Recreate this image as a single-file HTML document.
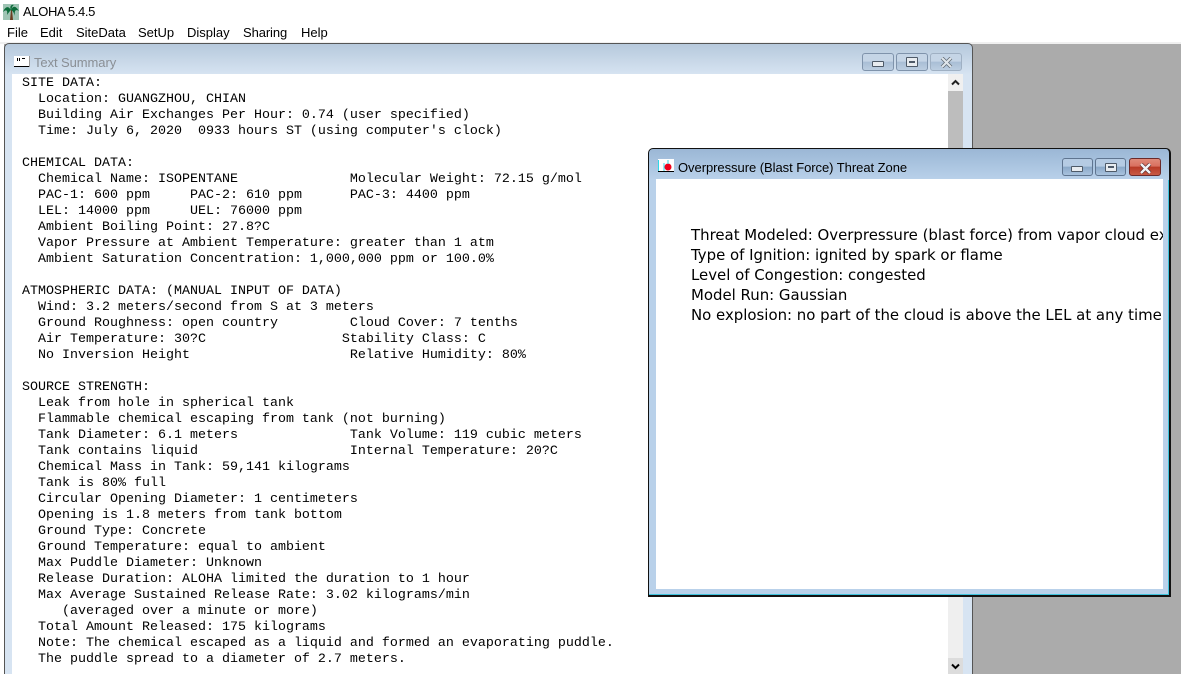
<!DOCTYPE html>
<html><head><meta charset="utf-8"><style>
html,body{margin:0;padding:0;background:#fff;width:1181px;height:674px;overflow:hidden}
div,svg,pre,span{position:absolute;box-sizing:border-box}
pre{margin:0}
.m{top:25px;font:13px/16px "Liberation Sans",sans-serif;color:#000;white-space:nowrap}
.b{border:1px solid #7f93ab;border-radius:3px;height:18px;width:32px}
.i{background:linear-gradient(#c5d5e6 0,#c5d5e6 45%,#a9bed5 50%,#bccee1 100%)}
.a{background:linear-gradient(#b5cbe3 0,#b5cbe3 45%,#8aa8c8 50%,#a9c3de 100%);border-color:#5f7590}
</style></head><body>
<div style="left:0;top:0;width:1181px;height:674px;overflow:hidden;background:#fff">
<svg style="left:3px;top:4px" width="16" height="16" viewBox="0 0 16 16"><rect width="16" height="16" fill="#9fc4b4"/><path d="M8 6L7 16h3L9 6z" fill="#6b3d20"/><path d="M8 6C5 1 2 3 0 8 3 5 5 6 4 11 6 8 7 7 8 6zM8 6c2-5 5-4 8 1-3-2-5-1-4 5C11 9 10 7 8 6z" fill="#0c6b3a"/><path d="M8 6C6 2 9 0 11 1 9 2 9 4 8 6z" fill="#0c6b3a"/></svg>
<div style="left:23px;top:4px;font:13px/16px 'Liberation Sans',sans-serif;letter-spacing:-.35px;color:#000;white-space:nowrap">ALOHA 5.4.5</div>
<div class="m" style="left:7px">File</div>
<div class="m" style="left:40px">Edit</div>
<div class="m" style="left:76px">SiteData</div>
<div class="m" style="left:138px">SetUp</div>
<div class="m" style="left:187px">Display</div>
<div class="m" style="left:243px;letter-spacing:-.1px">Sharing</div>
<div class="m" style="left:301px">Help</div>

<div style="left:0;top:42px;width:1181px;height:632px;background:#ababab"></div>
<div style="left:0;top:42px;width:1181px;height:2px;background:#f0f0f0"></div>
<div style="left:0;top:44px;width:4px;height:630px;background:#fff"></div>

<div style="left:4px;top:43px;width:969px;height:640px;border:1px solid #555;border-radius:5px 5px 0 0;background:linear-gradient(#b6c9dc 0,#d7e4f2 31px,#d7e4f2 100%)"></div>
<svg style="left:14px;top:56px" width="16" height="12" viewBox="0 0 16 12"><rect x="0" y="0" width="15" height="10" fill="#fff"/><rect x="0" y="10" width="15" height="1" fill="#000"/><rect x="15" y="0" width="1" height="11" fill="#999"/><path d="M3.500 2v3M5.500 2v3M8 2.500h3" stroke="#000" fill="none"/></svg>
<div style="left:34px;top:55px;font:13px/16px 'Liberation Sans',sans-serif;letter-spacing:-.08px;color:#8a8f95;white-space:nowrap">Text Summary</div>
<div class="b i" style="left:862px;top:53px"><div style="left:9px;top:7px;width:12px;height:6px;background:#e8ecf0;border:1px solid #4e5a68;border-radius:1px"></div></div>
<div class="b i" style="left:896px;top:53px"><div style="left:9px;top:3px;width:12px;height:10px;background:#e8ecf0;border:1px solid #4e5a68;border-radius:1px"></div><div style="left:12px;top:7px;width:6px;height:2px;background:#4e5a68"></div></div>
<div class="b i" style="left:930px;top:53px;border-color:#9fb0c3"><svg style="left:9px;top:3px" width="13" height="11" viewBox="0 0 13 11"><path d="M2 1l9 9M11 1l-9 9" stroke="#5c6670" stroke-width="3.6"/><path d="M2 1l9 9M11 1l-9 9" stroke="#dfe5ea" stroke-width="2.2"/></svg></div>

<div style="left:12px;top:74px;width:951px;height:600px;background:#fff"></div>
<div style="left:948px;top:74px;width:15px;height:600px;background:#efefef"></div>
<div style="left:948px;top:74px;width:15px;height:17px;background:#f0f0f0"></div>
<div style="left:948px;top:91px;width:15px;height:200px;background:#bdbdbd"></div>
<div style="left:948px;top:658px;width:15px;height:16px;background:#dcdcdc"></div>
<svg style="left:951px;top:79px" width="9" height="7" viewBox="0 0 9 7"><path d="M1 5.500l3.500-3.500 3.500 3.500" stroke="#222" stroke-width="2" fill="none"/></svg>
<svg style="left:951px;top:663px" width="9" height="7" viewBox="0 0 9 7"><path d="M1 1.500l3.500 3.500 3.500-3.500" stroke="#000" stroke-width="2" fill="none"/></svg>

<pre style="left:22px;top:76px;font:13.33px/16px 'Liberation Mono',monospace;color:#000">SITE DATA:
  Location: GUANGZHOU, CHIAN
  Building Air Exchanges Per Hour: 0.74 (user specified)
  Time: July 6, 2020  0933 hours ST (using computer's clock)

CHEMICAL DATA:
  Chemical Name: ISOPENTANE              Molecular Weight: 72.15 g/mol
  PAC-1: 600 ppm     PAC-2: 610 ppm      PAC-3: 4400 ppm
  LEL: 14000 ppm     UEL: 76000 ppm
  Ambient Boiling Point: 27.8?C
  Vapor Pressure at Ambient Temperature: greater than 1 atm
  Ambient Saturation Concentration: 1,000,000 ppm or 100.0%

ATMOSPHERIC DATA: (MANUAL INPUT OF DATA)
  Wind: 3.2 meters/second from S at 3 meters
  Ground Roughness: open country         Cloud Cover: 7 tenths
  Air Temperature: 30?C                 Stability Class: C
  No Inversion Height                    Relative Humidity: 80%

SOURCE STRENGTH:
  Leak from hole in spherical tank
  Flammable chemical escaping from tank (not burning)
  Tank Diameter: 6.1 meters              Tank Volume: 119 cubic meters
  Tank contains liquid                   Internal Temperature: 20?C
  Chemical Mass in Tank: 59,141 kilograms
  Tank is 80% full
  Circular Opening Diameter: 1 centimeters
  Opening is 1.8 meters from tank bottom
  Ground Type: Concrete
  Ground Temperature: equal to ambient
  Max Puddle Diameter: Unknown
  Release Duration: ALOHA limited the duration to 1 hour
  Max Average Sustained Release Rate: 3.02 kilograms/min
     (averaged over a minute or more)
  Total Amount Released: 175 kilograms
  Note: The chemical escaped as a liquid and formed an evaporating puddle.
  The puddle spread to a diameter of 2.7 meters.</pre>

<div style="left:648px;top:148px;width:523px;height:449px;border:1px solid #111;border-bottom-width:2px;border-right-width:2px;border-radius:5px 5px 0 0;background:linear-gradient(#9bb7d5 0,#b9d1ea 31px,#b9d1ea 100%)"></div>
<div style="left:649px;top:594px;width:520px;height:1px;background:#3fc3dc"></div>
<div style="left:1168px;top:180px;width:1px;height:415px;background:#3fc3dc"></div>
<svg style="left:658px;top:159px" width="16" height="14" viewBox="0 0 16 14"><rect width="16" height="13" fill="#fff"/><path d="M0.500 1v11" stroke="#30d8e8"/><path d="M0 12.500h16" stroke="#000"/><path d="M6 4v8" stroke="#30d8e8"/><circle cx="10" cy="8" r="3.500" fill="#f0001c"/><path d="M10 1v4" stroke="#30d8e8"/></svg>
<div style="left:678px;top:160px;font:13px/16px 'Liberation Sans',sans-serif;letter-spacing:-.05px;color:#000;white-space:nowrap">Overpressure (Blast Force) Threat Zone</div>
<div class="b a" style="left:1062px;top:158px;width:31px"><div style="left:8px;top:7px;width:12px;height:6px;background:#e8ecf0;border:1px solid #4e5a68;border-radius:1px"></div></div>
<div class="b a" style="left:1095px;top:158px;width:31px"><div style="left:9px;top:4px;width:12px;height:9px;background:#e8ecf0;border:1px solid #4e5a68;border-radius:1px"></div><div style="left:12px;top:7px;width:6px;height:2px;background:#4e5a68"></div></div>
<div class="b" style="left:1129px;top:158px;width:32px;border-color:#6b2a2a;background:linear-gradient(#e08a7a 0,#d9705f 45%,#b83a26 50%,#c85a45 100%)"><svg style="left:9px;top:4px" width="13" height="11" viewBox="0 0 13 11"><path d="M2 1l9 9M11 1l-9 9" stroke="#5a2a2a" stroke-width="3.8"/><path d="M2 1l9 9M11 1l-9 9" stroke="#f1f3f6" stroke-width="2.4"/></svg></div>
<div style="left:656px;top:179px;width:507px;height:410px;background:#fff;overflow:hidden">
<pre style="left:35px;top:46px;font:14.93px/20px 'DejaVu Sans',sans-serif;color:#000">Threat Modeled: Overpressure (blast force) from vapor cloud explosion
Type of Ignition: ignited by spark or flame
Level of Congestion: congested
Model Run: Gaussian
No explosion: no part of the cloud is above the LEL at any time</pre>
</div>
</div>
</body></html>
